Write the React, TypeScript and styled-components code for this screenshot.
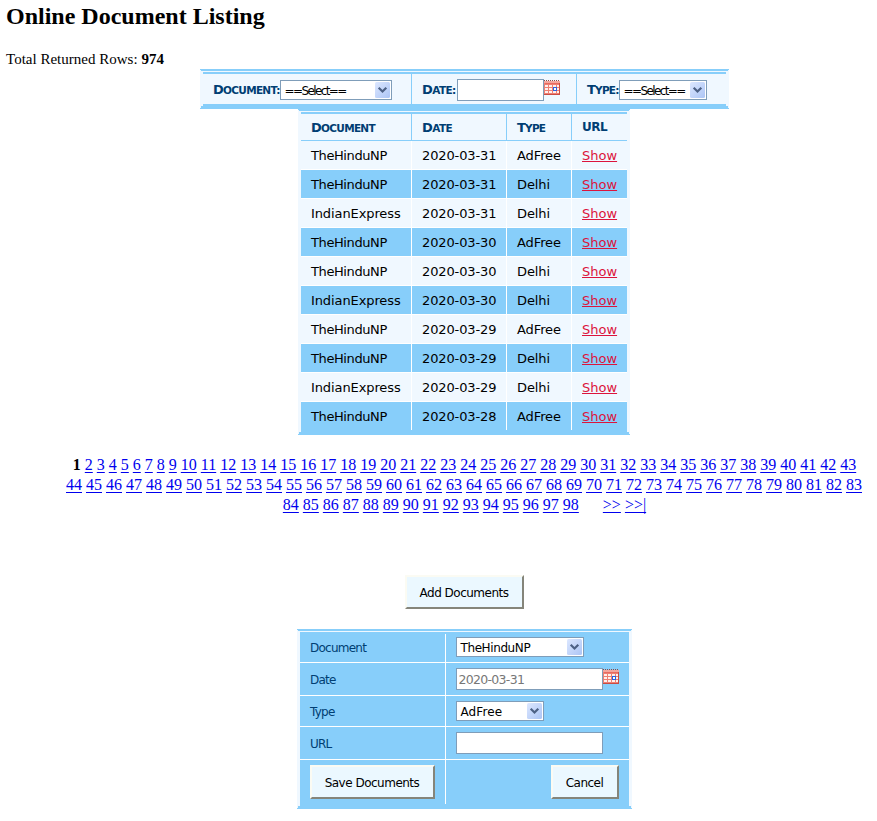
import React from "react";
import styled, { createGlobalStyle, css } from "styled-components";

const BLUE = "#87cefa";
const PALE = "#f0f8ff";
const NAVY = "#003e73";
const UI_FONT = '"DejaVu Sans", Verdana, sans-serif';

const GlobalStyle = createGlobalStyle`
  * { box-sizing: border-box; }
  body {
    margin: 0;
    background: #fff;
    color: #000;
    font: 16px "Liberation Serif", "Times New Roman", serif;
    overflow: hidden;
  }
`;

const Page = styled.main`
  width: 877px;
  height: 821px;
  display: flex;
  flex-direction: column;
  align-items: flex-start;
`;

const Title = styled.h2`
  margin: 2px 0 0 6px;
  height: 28px;
  line-height: 28px;
  font-size: 24px;
  white-space: nowrap;
`;

const Total = styled.p`
  margin: 19px 0 0 6px;
  height: 20px;
  line-height: 20px;
  font-size: 15px;
  white-space: nowrap;
  letter-spacing: 0.01px;
`;

/* Framed panel: ridged blue rules above and below, pale posts at the sides. */
const Frame = styled.section<{ $left: number; $width: number; $fill: string }>`
  margin-left: ${(p) => p.$left}px;
  width: ${(p) => p.$width}px;
  padding: 5px 3px;
  background:
    linear-gradient(${BLUE}, ${BLUE}) 0 0 / 100% 1px no-repeat,
    linear-gradient(${BLUE}, ${BLUE}) 1px 0 / calc(100% - 2px) 2px no-repeat,
    linear-gradient(${BLUE}, ${BLUE}) 3px 3px / calc(100% - 6px) 2px no-repeat,
    linear-gradient(${BLUE}, ${BLUE}) 0 100% / 100% 1px no-repeat,
    linear-gradient(${BLUE}, ${BLUE}) 1px 100% / calc(100% - 2px) 3px no-repeat,
    linear-gradient(${BLUE}, ${BLUE}) 3px 100% / calc(100% - 6px) 5px no-repeat,
    linear-gradient(${(p) => p.$fill}, ${(p) => p.$fill}) 3px 5px / calc(100% - 6px) calc(100% - 10px) no-repeat,
    ${PALE};
`;

const FilterRow = styled.div`
  display: grid;
  grid-template-columns: 209px 165px 149px;
  height: 30px;
`;

const FilterCell = styled.div<{ $label: number }>`
  display: grid;
  grid-template-columns: ${(p) => p.$label}px max-content max-content;
  align-items: center;
  padding: 2px 0 0 10px;
  &:not(:last-child) { border-right: 1px solid ${BLUE}; }
`;

const capsText = css`
  font-family: ${UI_FONT};
  font-weight: bold;
  font-size: 10.5px;
  text-transform: uppercase;
  color: ${NAVY};
  white-space: nowrap;
  &::first-letter { font-size: 13px; }
`;

const FilterLabel = styled.label<{ $track: number }>`
  ${capsText}
  display: block;
  line-height: 20px;
  letter-spacing: ${(p) => p.$track}px;
`;

const Grid = styled.div`
  display: grid;
  grid-template-columns: 111px 95px 65px 55px;
`;

const HeadCell = styled.div<{ $track: number; $full?: boolean }>`
  ${capsText}
  ${(p) => p.$full && css`
    font-size: 12px;
    &::first-letter { font-size: 12px; }
  `}
  height: 27px;
  line-height: 27px;
  border-bottom: 1px solid ${BLUE};
  border-right: 1px solid ${BLUE};
  padding-left: 10px;
  letter-spacing: ${(p) => p.$track}px;
  &:last-child { border-right: 0; }
`;

const RecordRow = styled(Grid)<{ $shaded: boolean }>`
  height: 29px;
  font: 13px/30px ${UI_FONT};
  background: ${(p) => (p.$shaded ? BLUE : PALE)};
  border-bottom: 1px solid #fff;
  &:last-child { height: 28px; border-bottom: 0; }
`;

const Field = styled.div<{ $track?: number }>`
  height: 28px;
  padding-left: 10px;
  white-space: nowrap;
  letter-spacing: ${(p) => p.$track ?? 0}px;
  &:not(:last-child) { border-right: 1px solid #fff; }
`;

const ShowLink = styled.a`
  color: crimson;
  text-decoration: underline;
  text-decoration-thickness: 1px;
  text-underline-offset: 1px;
`;

const Pager = styled.nav`
  width: 800px;
  margin: 20px 0 0 64px;
  text-align: center;
  line-height: 20px;
`;

const PagerLine = styled.div<{ $indent: number }>`
  white-space: pre;
  padding-left: ${(p) => p.$indent}px;
`;

const PageLink = styled.a`
  color: #0000ee;
  text-decoration: underline;
  text-decoration-thickness: 1px;
  text-underline-offset: 2px;
  text-decoration-skip-ink: none;
`;

const CurrentPage = styled.b`
  color: #000;
`;

const Button = styled.button<{ $width: number }>`
  width: ${(p) => p.$width}px;
  height: 34px;
  padding: 2px 1px 0 0;
  border: 2px solid;
  border-color: #fbfbf3 #85857a #85857a #fbfbf3;
  background: #ebf8ff;
  color: #000;
  font: 12px ${UI_FONT};
  letter-spacing: -0.5px;
  white-space: nowrap;
`;

const AddArea = styled.div`
  margin: 60px 0 20px 405px;
  height: 34px;
`;

const SelectBox = styled.div<{ $width: number }>`
  display: flex;
  align-items: center;
  justify-content: space-between;
  width: ${(p) => p.$width}px;
  height: 20px;
  padding: 0 1px 0 3.5px;
  border: 1px solid #7f9db9;
  background: #fff;
  font: 12px/18px ${UI_FONT};
`;

const SelectText = styled.span<{ $track: number }>`
  padding-top: 1px;
  white-space: nowrap;
  letter-spacing: ${(p) => p.$track}px;
`;

const TextInput = styled.input<{ $width: number }>`
  width: ${(p) => p.$width}px;
  height: 22px;
  margin: 0;
  padding: 1px 0 0 1.5px;
  border: 1px solid #7f9db9;
  border-radius: 0;
  background: #fff;
  color: #777;
  outline: 0;
  font: 12.5px ${UI_FONT};
  letter-spacing: -0.7px;
`;

const FormRow = styled.div<{ $height: number }>`
  display: grid;
  grid-template-columns: 146px 183px;
  height: ${(p) => p.$height}px;
  border-bottom: 1px solid #fff;
  &:last-child { border-bottom: 0; }
`;

const FormCell = styled.div<{ $top: number; $end?: boolean }>`
  display: flex;
  align-items: flex-start;
  justify-content: ${(p) => (p.$end ? "flex-end" : "flex-start")};
  padding: ${(p) => p.$top}px 10px 0;
  &:first-child { border-right: 1px solid #fff; }
`;

const FormLabel = styled.label`
  color: ${NAVY};
  font: 12px/20px ${UI_FONT};
  letter-spacing: -0.75px;
`;

const CalendarSvg = styled.svg`
  display: block;
  flex-shrink: 0;
  margin-top: 1px;
`;

const FilterCalendar = styled.div`
  align-self: start;
  margin-top: 3px;
`;

const Calendar = () => (
  <CalendarSvg width="16" height="15" viewBox="0 0 16 15" shapeRendering="crispEdges">
    <rect y="1" width="16" height="14" fill="#ee7f74" />
    <rect y="1" width="16" height="2" fill="#f4a59d" />
    <path d="M0 .5H16" stroke="#8c4a46" strokeDasharray="1 1" />
    <path d="M1 3.5H15" stroke="#e86a5f" />
    <path d="M1 5h3v2H1zM5 5h3v2H5zM9 5h3v2H9zM13 5h2v2h-2zM1 8h3v2H1zM5 8h3v2H5zM13 8h2v2h-2zM1 11h3v2H1zM5 11h3v2H5zM9 11h3v2H9zM13 11h2v2h-2z" fill="#fff0ed" />
    <rect x="9.5" y="7.5" width="3" height="3" fill="#fff" stroke="#2b62df" />
    <path d="M0 14.5H16M15.5 3V15" stroke="#c94d43" />
  </CalendarSvg>
);

const ArrowSvg = styled.svg`
  flex: 0 0 15px;
`;

const Arrow = () => (
  <ArrowSvg width="15" height="16" viewBox="0 0 15 16">
    <defs>
      <linearGradient id="arrowFace" x1="0" y1="0" x2="1" y2="1">
        <stop offset="0" stopColor="#dce7ff" />
        <stop offset="1" stopColor="#acc5f5" />
      </linearGradient>
    </defs>
    <rect width="15" height="16" rx="1.5" fill="url(#arrowFace)" />
    <path d="M3.7 5.7L7.5 9.5L11.3 5.7" fill="none" stroke="#4d6185" strokeWidth="2.2" />
  </ArrowSvg>
);

const Select = ({ width, text, track }: { width: number; text: string; track: number }) => (
  <SelectBox $width={width}>
    <SelectText $track={track}>{text}</SelectText>
    <Arrow />
  </SelectBox>
);

const headings: [string, number][] = [["Document", -0.7], ["Date", -0.6], ["Type", -0.8], ["URL", -0.5]];

const records = [
  ["TheHinduNP", "2020-03-31", "AdFree"],
  ["TheHinduNP", "2020-03-31", "Delhi"],
  ["IndianExpress", "2020-03-31", "Delhi"],
  ["TheHinduNP", "2020-03-30", "AdFree"],
  ["TheHinduNP", "2020-03-30", "Delhi"],
  ["IndianExpress", "2020-03-30", "Delhi"],
  ["TheHinduNP", "2020-03-29", "AdFree"],
  ["TheHinduNP", "2020-03-29", "Delhi"],
  ["IndianExpress", "2020-03-29", "Delhi"],
  ["TheHinduNP", "2020-03-28", "AdFree"],
];

const pageRanges = [[2, 43], [44, 83], [84, 98]];

const PageLinks = ({ from, to }: { from: number; to: number }) => (
  <>
    {Array.from({ length: to - from + 1 }, (_, i) => (
      <React.Fragment key={i}>
        {i > 0 && " "}
        <PageLink>{from + i}</PageLink>
      </React.Fragment>
    ))}
  </>
);

export default function App() {
  return (
    <Page>
      <GlobalStyle />
      <Title>Online Document Listing</Title>
      <Total>Total Returned Rows: <b>974</b></Total>

      <Frame $left={200} $width={529} $fill={PALE}>
        <FilterRow>
          <FilterCell $label={67}>
            <FilterLabel $track={-0.7}>Document:</FilterLabel>
            <Select width={112} text="==Select==" track={-1.6} />
          </FilterCell>
          <FilterCell $label={35}>
            <FilterLabel $track={-0.6}>Date:</FilterLabel>
            <TextInput $width={87} />
            <FilterCalendar><Calendar /></FilterCalendar>
          </FilterCell>
          <FilterCell $label={32}>
            <FilterLabel $track={-0.8}>Type:</FilterLabel>
            <Select width={88} text="==Select==" track={-1.6} />
          </FilterCell>
        </FilterRow>
      </Frame>

      <Frame $left={298} $width={332} $fill={PALE}>
        <Grid>
          {headings.map(([name, track]) => (
            <HeadCell key={name} $track={track} $full={name === "URL"}>{name}</HeadCell>
          ))}
        </Grid>
        <div>
          {records.map(([name, date, type], i) => (
            <RecordRow key={i} $shaded={i % 2 === 1}>
              <Field $track={name === "TheHinduNP" ? -0.4 : -0.1}>{name}</Field>
              <Field $track={-0.12}>{date}</Field>
              <Field $track={-0.1}>{type}</Field>
              <Field><ShowLink>Show</ShowLink></Field>
            </RecordRow>
          ))}
        </div>
      </Frame>

      <Pager>
        {pageRanges.map(([from, to], i) => (
          <PagerLine key={from} $indent={i === 1 ? 0 : 1}>
            {i === 0 && <><CurrentPage>1</CurrentPage>{" "}</>}
            <PageLinks from={from} to={to} />
            {i === 2 && <>{"      "}<PageLink>&gt;&gt;</PageLink>{" "}<PageLink>&gt;&gt;|</PageLink></>}
          </PagerLine>
        ))}
      </Pager>

      <AddArea><Button $width={119}>Add Documents</Button></AddArea>

      <Frame $left={297} $width={335} $fill={BLUE}>
        <FormRow $height={29}>
          <FormCell $top={4}><FormLabel>Document</FormLabel></FormCell>
          <FormCell $top={3}><Select width={128} text="TheHinduNP" track={-0.4} /></FormCell>
        </FormRow>
        <FormRow $height={33}>
          <FormCell $top={7}><FormLabel>Date</FormLabel></FormCell>
          <FormCell $top={5}><TextInput $width={147} defaultValue="2020-03-31" /><Calendar /></FormCell>
        </FormRow>
        <FormRow $height={31}>
          <FormCell $top={6}><FormLabel>Type</FormLabel></FormCell>
          <FormCell $top={5}><Select width={88} text="AdFree" track={0.1} /></FormCell>
        </FormRow>
        <FormRow $height={33}>
          <FormCell $top={7}><FormLabel>URL</FormLabel></FormCell>
          <FormCell $top={5}><TextInput $width={147} /></FormCell>
        </FormRow>
        <FormRow $height={44}>
          <FormCell $top={5}><Button $width={125}>Save Documents</Button></FormCell>
          <FormCell $top={5} $end><Button $width={68}>Cancel</Button></FormCell>
        </FormRow>
      </Frame>
    </Page>
  );
}
